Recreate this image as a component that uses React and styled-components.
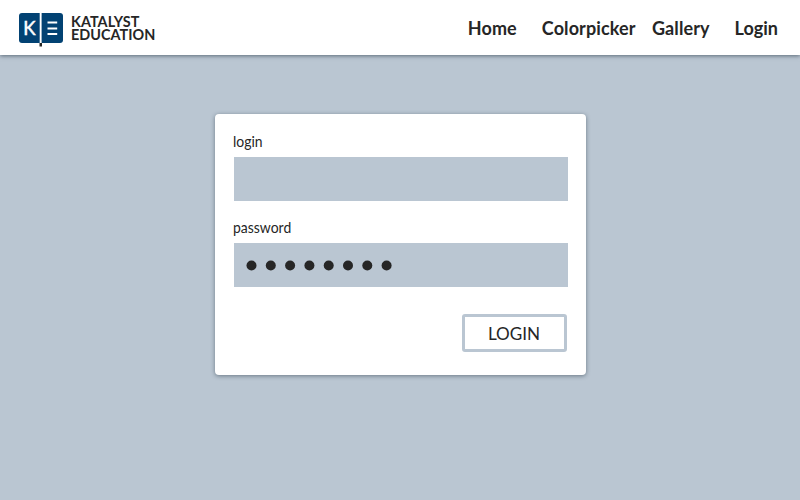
import React from "react";
import styled, { createGlobalStyle } from "styled-components";

const GlobalStyle = createGlobalStyle`
  * { box-sizing: border-box; }
  body {
    margin: 0;
    background: #bac6d2;
    color: #262626;
    font-family: Lato, "Open Sans", sans-serif;
  }
`;

const Page = styled.div`
  min-height: 500px;
  display: flex;
  flex-direction: column;
  align-items: center;
`;

const Header = styled.header`
  width: 100%;
  height: 55px;
  display: flex;
  justify-content: space-between;
  padding: 0 22px 0 19px;
  background: #fff;
  box-shadow: 0 1px 4px rgba(30, 45, 60, 0.6);
`;

const Brand = styled.div`
  display: flex;
  gap: 8px;
  padding-top: 13px;
`;

const Wordmark = styled.div`
  display: flex;
  flex-direction: column;
  padding-top: 2px;
  font-size: 14.4px;
  font-weight: 700;
  line-height: 13px;
`;

const Word = styled.div`
  height: 12.5px;
  letter-spacing: ${(p) => p.$spacing};
  white-space: nowrap;
`;

const Nav = styled.nav`
  display: flex;
  align-items: center;
`;

const NavLink = styled.a`
  margin-left: ${(p) => p.$gap || "0"};
  font-size: 18px;
  font-weight: 700;
  line-height: 22px;
  letter-spacing: ${(p) => p.$spacing || "0"};
  white-space: nowrap;
`;

const Card = styled.main`
  width: 371px;
  height: 261px;
  margin-top: 59px;
  padding: 18px 18px 23px 19px;
  display: flex;
  flex-direction: column;
  background: #fff;
  border-radius: 4px;
  box-shadow: 0 1px 4px rgba(30, 45, 60, 0.5);
`;

const Label = styled.label`
  height: 25px;
  margin-left: -1px;
  font-size: 15px;
  line-height: 18px;
  transform: scaleX(0.93);
  transform-origin: left;
`;

const Field = styled.div`
  height: 44px;
  flex: none;
  margin-bottom: 17px;
  padding: 0 0 0 12px;
  display: flex;
  align-items: center;
  background: #bac6d2;
`;

const Button = styled.button`
  align-self: flex-end;
  width: 105px;
  height: 38px;
  margin: 10px 1px 0 0;
  padding: 0;
  background: #fff;
  border: 3px solid #bac6d2;
  border-radius: 3px;
  color: inherit;
  font: 400 18px/32px Lato, sans-serif;
`;

const ButtonText = styled.span`
  display: block;
  margin-right: 1px;
  transform: scaleX(0.95);
`;

const Dots = styled.svg`
  display: block;
  fill: #262626;
`;

const LogoMark = styled.svg`
  display: block;
  flex: none;
`;

const LogoLetter = styled.text`
  fill: #fff;
  stroke: #fff;
  stroke-width: 0.5px;
  font: 400 18.5px Lato, sans-serif;
`;

function BookLogo() {
  return (
    <LogoMark width="44" height="34" viewBox="0 0 44 34" aria-label="Katalyst Education">
      <path d="M3 0H20.7V30H3Q0 30 0 27V3Q0 0 3 0Z" fill="#024273" />
      <path d="M22.6 0H41Q44 0 44 3V27Q44 30 41 30H22.6Z" fill="#024273" />
      <rect x="20.5" y="30" width="2.5" height="3.5" fill="#262626" />
      <LogoLetter x="4.3" y="21.7">K</LogoLetter>
      <path d="M28.5 9.5H38.2M28.5 15.5H38.2M28.5 21H38.2" stroke="#fff" strokeWidth="2.1" />
    </LogoMark>
  );
}

function PasswordDots() {
  return (
    <Dots width="146" height="12" viewBox="0 0 146 12">
      {Array.from({ length: 8 }, (_, i) => (
        <circle key={i} cx={5.5 + i * 19.3} cy="6.5" r="5" />
      ))}
    </Dots>
  );
}

export default function App() {
  return (
    <Page>
      <GlobalStyle />
      <Header>
        <Brand>
          <BookLogo />
          <Wordmark>
            <Word $spacing="0.05px">KATALYST</Word>
            <Word $spacing="0.03px">EDUCATION</Word>
          </Wordmark>
        </Brand>
        <Nav>
          <NavLink $spacing="0.1px">Home</NavLink>
          <NavLink $gap="25px" $spacing="0.1px">Colorpicker</NavLink>
          <NavLink $gap="16.5px" $spacing="0.1px">Gallery</NavLink>
          <NavLink $gap="25px">Login</NavLink>
        </Nav>
      </Header>
      <Card>
        <Label>login</Label>
        <Field />
        <Label>password</Label>
        <Field>
          <PasswordDots />
        </Field>
        <Button type="button">
          <ButtonText>LOGIN</ButtonText>
        </Button>
      </Card>
    </Page>
  );
}
